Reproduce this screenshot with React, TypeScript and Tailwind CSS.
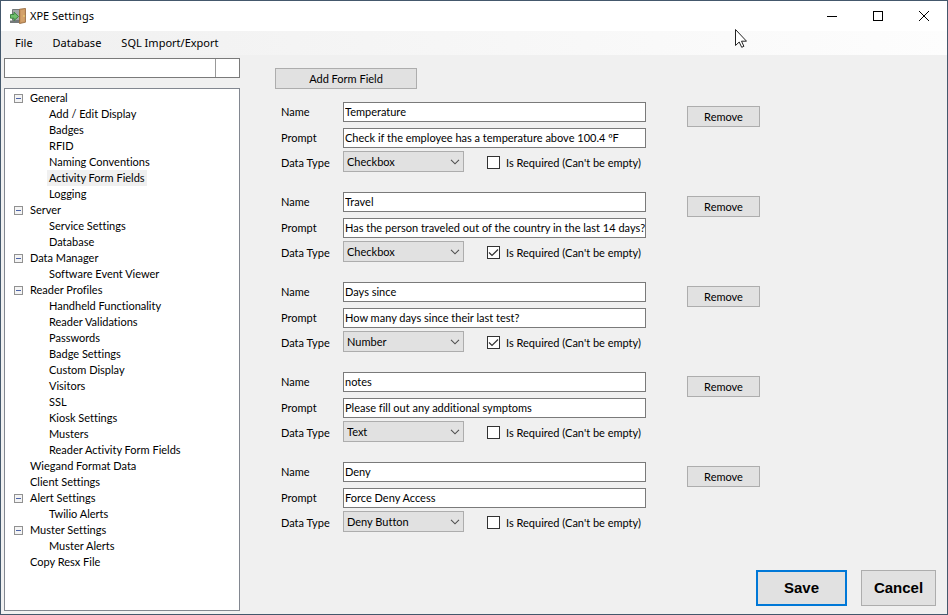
import { useState } from "react";

type TreeNode = { label: string; children?: string[] };
type DataType = "Checkbox" | "Number" | "Text" | "Deny Button";
type Field = { id: number; name: string; prompt: string; type: DataType; required: boolean };

const TREE: TreeNode[] = [
  {
    label: "General",
    children: ["Add / Edit Display", "Badges", "RFID", "Naming Conventions", "Activity Form Fields", "Logging"],
  },
  { label: "Server", children: ["Service Settings", "Database"] },
  { label: "Data Manager", children: ["Software Event Viewer"] },
  {
    label: "Reader Profiles",
    children: [
      "Handheld Functionality",
      "Reader Validations",
      "Passwords",
      "Badge Settings",
      "Custom Display",
      "Visitors",
      "SSL",
      "Kiosk Settings",
      "Musters",
      "Reader Activity Form Fields",
    ],
  },
  { label: "Wiegand Format Data" },
  { label: "Client Settings" },
  { label: "Alert Settings", children: ["Twilio Alerts"] },
  { label: "Muster Settings", children: ["Muster Alerts"] },
  { label: "Copy Resx File" },
];

const FIELDS: Field[] = [
  { id: 1, name: "Temperature", prompt: "Check if the employee has a temperature above 100.4 ºF", type: "Checkbox", required: false },
  { id: 2, name: "Travel", prompt: "Has the person traveled out of the country in the last 14 days?", type: "Checkbox", required: true },
  { id: 3, name: "Days since", prompt: "How many days since their last test?", type: "Number", required: true },
  { id: 4, name: "notes", prompt: "Please fill out any additional symptoms", type: "Text", required: false },
  { id: 5, name: "Deny", prompt: "Force Deny Access", type: "Deny Button", required: false },
];

const DATA_TYPES: DataType[] = ["Checkbox", "Number", "Text", "Deny Button"];

function DoorIcon() {
  return (
    <svg width="17" height="16" viewBox="0 0 17 16" aria-hidden="true">
      <path d="M3.500 1.500H11v11H3.500z" fill="#a3a7a8" stroke="#74797a" />
      <path d="M1 12.500h9.500V15H1z" fill="#74797a" />
      <path d="M10.500 1.200 16.500.4v13.800l-6 1.400z" fill="#c99660" stroke="#93673a" strokeWidth=".8" />
      <path d="M12 2.200 15.500 1.600v11.600l-3.500.8z" fill="#d3a26c" />
      <circle cx="15" cy="8" r=".8" fill="#f7df78" />
      <path d="M1.500 6.500H5V4.200L9.500 8.500 5 12.500v-2.300H1.500z" fill="#6fbf6d" stroke="#35803a" strokeWidth=".9" />
    </svg>
  );
}

function TitleBar() {
  const control = "flex h-7 w-[46px] items-center justify-center";
  return (
    <header className="flex h-[30px] items-center bg-white pl-2">
      <DoorIcon />
      <h1 className="ml-1 flex-1 font-['Noto_Sans',sans-serif] text-[11px]">XPE Settings</h1>
      <button type="button" aria-label="Minimize" className={control}>
        <svg width="10" height="10" viewBox="0 0 10 10" shapeRendering="crispEdges">
          <path d="M0 5.5h10" stroke="#000" />
        </svg>
      </button>
      <button type="button" aria-label="Maximize" className={control}>
        <svg width="10" height="10" viewBox="0 0 10 10" shapeRendering="crispEdges">
          <path d="M.5.5h9v9h-9z" fill="none" stroke="#000" />
        </svg>
      </button>
      <button type="button" aria-label="Close" className={control}>
        <svg width="10" height="10" viewBox="0 0 10 10">
          <path d="m0 0 10 10M10 0 0 10" stroke="#000" />
        </svg>
      </button>
    </header>
  );
}

function MenuBar() {
  return (
    <nav className="flex h-6 items-center gap-5 bg-linear-to-r from-[#f0f0f0] to-[#fdfdfd] pl-3.5 font-['Noto_Sans',sans-serif] text-[11px]">
      <button type="button">File</button>
      <button type="button">Database</button>
      <button type="button">SQL Import/Export</button>
    </nav>
  );
}

function Expander({ label, open, onToggle }: { label: string; open: boolean; onToggle: () => void }) {
  return (
    <button type="button" aria-label={`Toggle ${label}`} aria-expanded={open} onClick={onToggle}>
      <svg width="9" height="9" viewBox="0 0 9 9" shapeRendering="crispEdges">
        <rect x=".5" y=".5" width="8" height="8" rx="1" fill="#f4f4f4" stroke="#919191" />
        <path d={open ? "M2 4.5h5" : "M2 4.5h5M4.5 2v5"} stroke="#4b63a7" />
      </svg>
    </button>
  );
}

function Sidebar() {
  const [closed, setClosed] = useState<string[]>([]);
  const [selected, setSelected] = useState("Activity Form Fields");
  const toggle = (label: string) =>
    setClosed((c) => (c.includes(label) ? c.filter((l) => l !== label) : [...c, label]));

  return (
    <aside className="flex w-[239px] shrink-0 flex-col gap-2.5 pt-[3px] pb-[3px] pl-[3px]">
      <div className="flex h-5 border border-[#7a7a7a] bg-white">
        <input aria-label="Search settings" className="min-w-0 flex-1 px-0.5 outline-none" />
        <button type="button" aria-label="Search" className="w-6 border-l border-[#999999]" />
      </div>
      <ul className="flex-1 border border-[#828790] bg-white pt-px pl-[9px]">
        {TREE.map((node) => (
          <li key={node.label}>
            <div className="flex h-4 items-center">
              <span className="flex w-3.5 items-center">
                {node.children && (
                  <Expander label={node.label} open={!closed.includes(node.label)} onToggle={() => toggle(node.label)} />
                )}
              </span>
              <button type="button" className="h-4 px-0.5" onClick={() => node.children && toggle(node.label)}>
                {node.label}
              </button>
            </div>
            {node.children && !closed.includes(node.label) && (
              <ul className="pl-[33px]">
                {node.children.map((child) => (
                  <li key={child} className="flex h-4">
                    <button
                      type="button"
                      onClick={() => setSelected(child)}
                      className={`h-4 px-0.5 ${child === selected ? "bg-[#f0f0f0]" : ""}`}
                    >
                      {child}
                    </button>
                  </li>
                ))}
              </ul>
            )}
          </li>
        ))}
      </ul>
    </aside>
  );
}

function FieldEditor({ field, onRemove }: { field: Field; onRemove: () => void }) {
  const textBox = "h-5 w-full border border-[#7a7a7a] bg-white pb-0.5 pl-px outline-none";
  const id = `field-${field.id}`;
  return (
    <section className="flex h-[70px] items-start gap-[41px] pl-1.5">
      <div className="grid max-w-[365px] flex-1 grid-cols-[62px_1fr] items-center">
        <label htmlFor={`${id}-name`}>Name</label>
        <input id={`${id}-name`} defaultValue={field.name} className={textBox} />
        <label htmlFor={`${id}-prompt`} className="mt-1.5">Prompt</label>
        <input id={`${id}-prompt`} defaultValue={field.prompt} className={`${textBox} mt-1.5`} />
        <label htmlFor={`${id}-type`} className="mt-1.5">Data Type</label>
        <div className="mt-[3px] flex items-center">
          <div className="relative h-[21px] w-[121px]">
            <select
              id={`${id}-type`}
              defaultValue={field.type}
              className="h-full w-full appearance-none border border-[#adadad] bg-[#e1e1e1] pr-5 pl-[3px] outline-none"
            >
              {DATA_TYPES.map((t) => (
                <option key={t}>{t}</option>
              ))}
            </select>
            <svg className="pointer-events-none absolute top-2 right-1" width="10" height="6" viewBox="0 0 10 6">
              <path d="M1 .8 5 4.800 9 .8" fill="none" stroke="#505050" strokeWidth="1.1" />
            </svg>
          </div>
          <label className="mt-0.5 ml-[23px] flex items-center gap-1.5 whitespace-nowrap">
            <span className="relative h-[13px] w-[13px]">
              <input
                type="checkbox"
                defaultChecked={field.required}
                className="peer block h-[13px] w-[13px] appearance-none border border-[#333333] bg-white"
              />
              <svg
                className="pointer-events-none absolute inset-0 hidden peer-checked:block"
                width="13"
                height="13"
                viewBox="0 0 13 13"
              >
                <path d="m2 6.500 3 3 6-6" fill="none" stroke="#333" strokeWidth="1.200" />
              </svg>
            </span>
            Is Required (Can't be empty)
          </label>
        </div>
      </div>
      <button type="button" onClick={onRemove} className="mt-1 h-[21px] w-[73px] border border-[#adadad] bg-[#e1e1e1]">
        Remove
      </button>
    </section>
  );
}

export default function App() {
  const [fields, setFields] = useState(FIELDS);
  const addField = () =>
    setFields((f) => [
      ...f,
      { id: Math.max(0, ...f.map((x) => x.id)) + 1, name: "", prompt: "", type: "Text", required: false },
    ]);

  return (
    <div className="relative flex min-h-screen flex-col border border-[#44586c] bg-[#f0f0f0] font-[Lato,'Liberation_Sans',sans-serif] text-[11px] leading-4 text-black [font-variant-ligatures:none]">
      <TitleBar />
      <MenuBar />
      <div className="flex flex-1">
        <Sidebar />
        <main className="flex min-w-0 flex-1 flex-col pt-[13px] pr-[11px] pb-2 pl-[35px]">
          <button
            type="button"
            onClick={addField}
            className="h-[21px] w-[142px] border border-[#adadad] bg-[#e1e1e1]"
          >
            Add Form Field
          </button>
          <div className="mt-[13px] flex flex-col gap-5">
            {fields.map((field) => (
              <FieldEditor
                key={field.id}
                field={field}
                onRemove={() => setFields((f) => f.filter((x) => x.id !== field.id))}
              />
            ))}
          </div>
          <footer className="mt-auto flex justify-end gap-3.5 font-['Liberation_Sans',Arial,sans-serif] text-[15px] font-bold">
            <button type="button" className="h-9 w-[91px] border-2 border-[#0078d7] bg-[#e1e1e1]">
              Save
            </button>
            <button type="button" className="h-9 w-[75px] border border-[#adadad] bg-[#e1e1e1]">
              Cancel
            </button>
          </footer>
        </main>
      </div>
      <svg
        className="pointer-events-none absolute top-7 left-[734px]"
        width="12"
        height="19"
        viewBox="0 0 12 19"
        aria-hidden="true"
      >
        <path d="M.5.5v16l3.700-3.500 2.500 5.300 2.200-1-2.400-5.100h5z" fill="#fff" stroke="#222" />
      </svg>
    </div>
  );
}
